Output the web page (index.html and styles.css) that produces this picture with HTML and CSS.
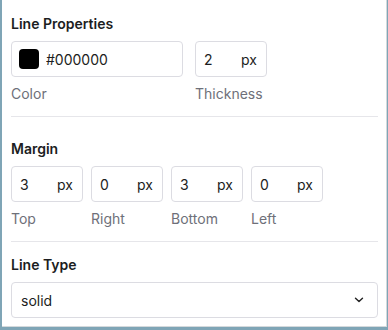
FILE: index.html
```html
<!DOCTYPE html>
<html lang="en">
<head>
    <meta charset="UTF-8">
    <meta name="viewport" content="width=device-width, initial-scale=1.0">
    <title>Line Properties</title>
    <link rel="stylesheet" href="styles.css">
</head>
<body>
    <div class="panel">
        <div class="section first">
            <h3>Line Properties</h3>
            <div class="row">
                <div class="group">
                    <div class="field color-field">
                        <span class="swatch"></span>
                        <input type="text" value="#000000">
                    </div>
                    <label>Color</label>
                </div>
                <div class="group">
                    <div class="field num">
                        <input type="text" value="2">
                        <span class="unit">px</span>
                    </div>
                    <label>Thickness</label>
                </div>
            </div>
        </div>

        <div class="section margin">
            <h3>Margin</h3>
            <div class="row tight">
                <div class="group">
                    <div class="field num"><input type="text" value="3"><span class="unit">px</span></div>
                    <label>Top</label>
                </div>
                <div class="group">
                    <div class="field num"><input type="text" value="0"><span class="unit">px</span></div>
                    <label>Right</label>
                </div>
                <div class="group">
                    <div class="field num"><input type="text" value="3"><span class="unit">px</span></div>
                    <label>Bottom</label>
                </div>
                <div class="group">
                    <div class="field num"><input type="text" value="0"><span class="unit">px</span></div>
                    <label>Left</label>
                </div>
            </div>
        </div>

        <div class="section last">
            <h3>Line Type</h3>
            <div class="select-wrap">
                <select>
                    <option>solid</option>
                    <option>dashed</option>
                    <option>dotted</option>
                </select>
                <svg class="chevron" width="10" height="6" viewBox="0 0 10 6">
                    <path d="M1.5 1.2 L5 4.6 L8.5 1.2" fill="none" stroke="#222" stroke-width="1.4" stroke-linecap="round" stroke-linejoin="round"/>
                </svg>
            </div>
        </div>
    </div>
</body>
</html>
```

FILE: styles.css
```css
html, body {
    margin: 0;
    padding: 0;
    height: 330px;
    overflow: hidden;
}
body {
    background-color: #7fa5b6;
    font-family: Inter, "Noto Sans", sans-serif;
    font-size: 14px;
    color: #1f2328;
}
.panel {
    margin-left: 2px;
    width: 385px;
    height: 327px;
    box-sizing: border-box;
    padding: 0 8px 0 9px;
    background-color: white;
    border-right: 1px solid #d4d9dc;
    border-bottom: 1px solid #d4d9dc;
}
.section {
    padding: 22px 0 12px;
    border-bottom: 1px solid #e6e6ea;
}
.section.first {
    padding-top: 14px;
}
.section.last {
    padding-top: 13px;
    border-bottom: none;
}
h3 {
    margin: 0 0 7px;
    font-size: 14px;
    line-height: 20px;
    font-weight: 600;
    color: #1c1d21;
}
.row {
    display: flex;
    gap: 12px;
}
.row.tight {
    gap: 8px;
}
.group {
    display: flex;
    flex-direction: column;
}
label {
    margin-top: 7px;
    line-height: 20px;
    color: #6e7079;
}
.field {
    display: flex;
    align-items: center;
    height: 36px;
    box-sizing: border-box;
    border: 1px solid #dcdce2;
    border-radius: 4px;
    background-color: white;
}
.field input {
    border: none;
    outline: none;
    padding: 0;
    margin: 0;
    min-width: 0;
    flex: 1;
    font-family: inherit;
    font-size: 14px;
    color: #1c1d21;
    background: transparent;
}
.color-field {
    width: 172px;
    padding: 0 8px 0 7px;
    gap: 7px;
}
.swatch {
    width: 20px;
    height: 20px;
    border-radius: 4px;
    background-color: #000;
    flex: none;
}
.num {
    width: 72px;
    padding: 0 9px 0 8px;
}
.unit {
    color: #1c1d21;
}
.select-wrap {
    position: relative;
}
select {
    display: block;
    width: 367px;
    height: 36px;
    box-sizing: border-box;
    padding: 0 9px;
    border: 1px solid #dcdce2;
    border-radius: 4px;
    background-color: white;
    font-family: inherit;
    font-size: 14px;
    color: #1c1d21;
    appearance: none;
    -webkit-appearance: none;
    outline: none;
}
.chevron {
    position: absolute;
    right: 14px;
    top: 15px;
    pointer-events: none;
}
```
